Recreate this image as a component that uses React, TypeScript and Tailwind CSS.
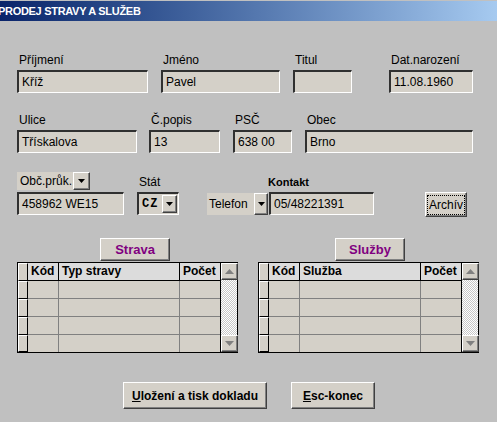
import React from "react";

const font = { fontFamily: '"Liberation Sans", Arial, sans-serif' };

function Input({ w, value, className = "" }: { w: string; value?: string; className?: string }) {
  return (
    <div
      className={`${w} h-[23px] bg-[#d4d0c8] border-t-2 border-l-2 border-t-[#303030] border-l-[#303030] border-b border-r border-b-white border-r-white flex items-center pl-[3px] text-[12px] text-black leading-none ${className}`}
    >
      {value}
    </div>
  );
}

function Field({ label, w, value, ml }: { label: string; w: string; value?: string; ml: string }) {
  return (
    <div className={`flex flex-col ${ml}`}>
      <span className="pl-[2px] text-[12px] leading-[14px] h-[14px] mb-[3px] text-black">{label}</span>
      <Input w={w} value={value} />
    </div>
  );
}

function Arrow() {
  return (
    <svg width="7" height="4" viewBox="0 0 7 4">
      <path d="M0 0h7L3.5 4z" fill="#000" />
    </svg>
  );
}

function DropBtn({ size }: { size: string }) {
  return (
    <div
      className={`${size} bg-[#d4d0c8] border border-t-white border-l-white border-b-[#404040] border-r-[#404040] shadow-[inset_-1px_-1px_0_#808080] flex items-center justify-center`}
    >
      <Arrow />
    </div>
  );
}

function Button({ children, className = "" }: { children: React.ReactNode; className?: string }) {
  return (
    <div
      className={`bg-[#d4d0c8] border border-t-white border-l-white border-b-[#404040] border-r-[#404040] shadow-[inset_-1px_-1px_0_#808080] flex items-center justify-center ${className}`}
    >
      {children}
    </div>
  );
}

function ScrollBtn({ up }: { up?: boolean }) {
  return (
    <div className="h-[17px] w-[17px] bg-[#d4d0c8] border border-t-white border-l-white border-b-[#404040] border-r-[#404040] shadow-[inset_-1px_-1px_0_#808080] flex items-center justify-center">
      <svg width="9" height="5" viewBox="0 0 9 5">
        <path d={up ? "M0 5h9L4.5 0z" : "M0 0h9L4.5 5z"} fill="#808080" />
      </svg>
    </div>
  );
}

function Grid({ cols }: { cols: string[] }) {
  const rows = [0, 1, 2, 3];
  return (
    <div className="flex border border-black bg-black w-[221px]">
      <div className="grid grid-cols-[10px_31px_121px_40px] grid-rows-[18px_18px_18px_18px_17px] gap-0 bg-[#d4d0c8]">
        <div className="bg-[#d4d0c8] border-t border-l border-t-white border-l-white border-r border-b border-r-black border-b-black" />
        {cols.map((c, i) => (
          <div
            key={c}
            className={`bg-[#dcdcdc] border-b border-b-black ${i < 2 ? "border-r border-r-black" : ""} text-[12px] font-bold leading-[17px] pl-[3px] text-black`}
          >
            {c}
          </div>
        ))}
        {rows.map((r) => (
          <React.Fragment key={r}>
            <div className="bg-[#d4d0c8] border-t border-l border-t-white border-l-white border-r border-r-black border-b border-b-black" />
            <div className={`${r < 3 ? "border-b" : ""} border-r border-[#808080]`} />
            <div className={`${r < 3 ? "border-b" : ""} border-r border-[#808080]`} />
            <div className={`${r < 3 ? "border-b" : ""} border-[#808080]`} />
          </React.Fragment>
        ))}
      </div>
      <div className="flex flex-col w-[17px] border-l border-l-black bg-[repeating-conic-gradient(#c8c8c8_0%_25%,#ffffff_0%_50%)] bg-[length:2px_2px] justify-between">
        <ScrollBtn up />
        <ScrollBtn />
      </div>
    </div>
  );
}

export default function App() {
  return (
    <div style={font} className="w-[497px] h-[422px] bg-[#c0c0c0] overflow-hidden text-black">
      <div className="mt-[1px] h-[20px] bg-gradient-to-r from-[#0a246a] to-[#a6caf0] flex items-center">
        <span className="ml-[-2px] text-white font-bold text-[11px] tracking-[-0.3px]">PRODEJ STRAVY A SLUŽEB</span>
      </div>

      <div className="flex pt-[32px]">
        <Field label="Příjmení" w="w-[131px]" value="Kříž" ml="ml-[17px]" />
        <Field label="Jméno" w="w-[119px]" value="Pavel" ml="ml-[13px]" />
        <Field label="Titul" w="w-[59px]" ml="ml-[13px]" />
        <Field label="Dat.narození" w="w-[84px]" value="11.08.1960" ml="ml-[37px]" />
      </div>

      <div className="flex pt-[20px]">
        <Field label="Ulice" w="w-[120px]" value="Třískalova" ml="ml-[17px]" />
        <Field label="Č.popis" w="w-[71px]" value="13" ml="ml-[12px]" />
        <Field label="PSČ" w="w-[59px]" value="638 00" ml="ml-[13px]" />
        <Field label="Obec" w="w-[168px]" value="Brno" ml="ml-[13px]" />
      </div>

      <div className="flex items-end pt-[17px] h-[62px]">
        <div className="flex flex-col ml-[17px]">
          <div className="flex h-[18px] mb-[2px]">
            <div className="w-[56px] bg-[#d4d0c8] text-[12px] leading-[18px] pl-[3px]">Obč.průk.</div>
            <DropBtn size="w-[17px] h-[18px]" />
          </div>
          <Input w="w-[107px]" value="458962 WE15" />
        </div>
        <div className="flex flex-col ml-[13px]">
          <span className="pl-[2px] text-[12px] leading-[14px] mb-[3px]">Stát</span>
          <div className="w-[42px] h-[23px] bg-[#d4d0c8] border-t-2 border-l-2 border-t-[#303030] border-l-[#303030] border-b border-r border-b-white border-r-white flex items-center">
            <span className="font-bold text-[12px] pl-[3px] w-[23px] tracking-[1px]" style={{ fontFamily: '"Liberation Mono", monospace' }}>CZ</span>
            <DropBtn size="w-[15px] h-[18px]" />
          </div>
        </div>
        <div className="flex ml-[28px] items-end">
          <div className="flex h-[22px]">
            <div className="w-[47px] bg-[#d4d0c8] text-[12px] leading-[22px] pl-[2px]">Telefon</div>
            <DropBtn size="w-[14px] h-[22px]" />
          </div>
          <div className="flex flex-col ml-[1px]">
            <span className="font-bold text-[11px] leading-[14px] mb-[3px] -ml-[1px]">Kontakt</span>
            <Input w="w-[105px]" value="05/48221391" />
          </div>
        </div>
        <Button className="ml-[51px] w-[42px] h-[25px] text-[12px] mb-[-2px]">
          <span className="outline outline-1 outline-dotted outline-black px-[1px]">Archív</span>
        </Button>
      </div>

      <div className="flex pt-[23px]">
        <div className="flex flex-col ml-[17px]">
          <Button className="ml-[83px] w-[70px] h-[23px] text-[13px] font-bold text-[#800080] mb-[1px]">Strava</Button>
          <Grid cols={["Kód", "Typ stravy", "Počet"]} />
        </div>
        <div className="flex flex-col ml-[20px]">
          <Button className="ml-[77px] w-[70px] h-[23px] text-[13px] font-bold text-[#800080] mb-[1px]">Služby</Button>
          <Grid cols={["Kód", "Služba", "Počet"]} />
        </div>
      </div>

      <div className="flex pt-[29px]">
        <Button className="ml-[123px] w-[144px] h-[27px] text-[12px] font-bold">
          <span><span className="underline">U</span>ložení a tisk dokladu</span>
        </Button>
        <Button className="ml-[24px] w-[84px] h-[27px] text-[12px] font-bold">
          <span><span className="underline">E</span>sc-konec</span>
        </Button>
      </div>
    </div>
  );
}
